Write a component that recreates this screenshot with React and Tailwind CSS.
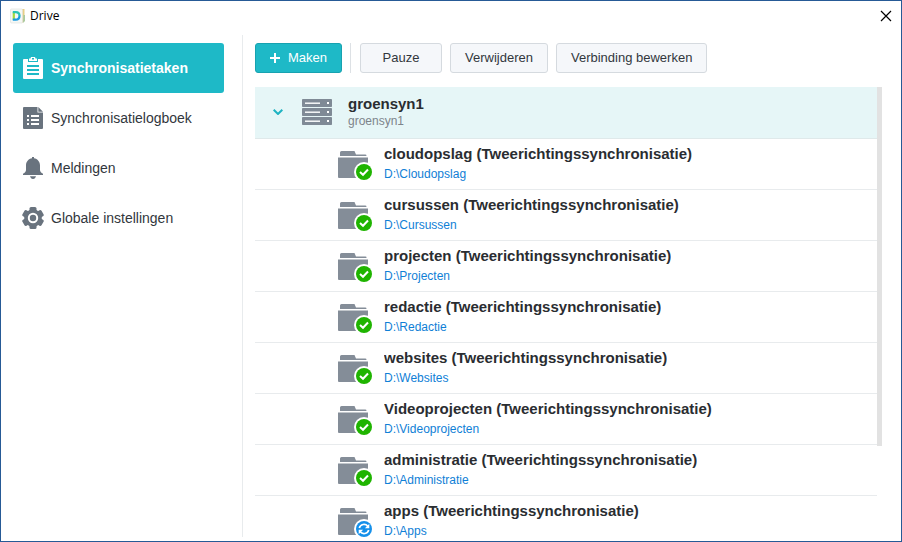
const FONT = 'font-["Liberation_Sans",Arial,sans-serif]';

const NAV_ITEMS = [
  { label: 'Synchronisatietaken', Icon: ClipboardIcon, active: true },
  { label: 'Synchronisatielogboek', Icon: LogIcon },
  { label: 'Meldingen', Icon: BellIcon },
  { label: 'Globale instellingen', Icon: GearIcon },
];

const TASKS = [
  { name: 'cloudopslag', path: 'D:\\Cloudopslag', status: 'done' },
  { name: 'cursussen', path: 'D:\\Cursussen', status: 'done' },
  { name: 'projecten', path: 'D:\\Projecten', status: 'done' },
  { name: 'redactie', path: 'D:\\Redactie', status: 'done' },
  { name: 'websites', path: 'D:\\Websites', status: 'done' },
  { name: 'Videoprojecten', path: 'D:\\Videoprojecten', status: 'done' },
  { name: 'administratie', path: 'D:\\Administratie', status: 'done' },
  { name: 'apps', path: 'D:\\Apps', status: 'syncing' },
];

function DriveLogo() {
  return (
    <svg viewBox="0 0 16 16" className="w-4 h-4 shrink-0" aria-hidden="true">
      <path d="M12 1h2.500v12L12 15z" fill="#e8cf86" />
      <path d="M13.500 7H15v6l-2 2z" fill="#a9c9a0" />
      <rect x="0.500" y="1" width="12" height="14" rx="1" fill="#f6f8f6" stroke="#dcdfdc" strokeWidth="0.600" />
      <path d="M3.800 4v8" stroke="#a5d93c" strokeWidth="2.200" fill="none" />
      <path d="M2.800 4.200h3c2.400 0 3.700 1.400 3.700 3.800" stroke="#2bc4b4" strokeWidth="2.200" fill="none" />
      <path d="M9.500 7.800c0 2.400-1.300 3.900-3.700 3.900h-3" stroke="#1a9be0" strokeWidth="2.200" fill="none" />
    </svg>
  );
}

function ClipboardIcon() {
  return (
    <svg viewBox="0 0 20 22" className="w-5 h-[22px] shrink-0" aria-hidden="true">
      <path
        fill="currentColor"
        fillRule="evenodd"
        d="M1 2h4v3h10V2h4a1 1 0 0 1 1 1v18a1 1 0 0 1-1 1H1a1 1 0 0 1-1-1V3a1 1 0 0 1 1-1zM4 8v2h12V8zM4 12v2h12v-2zM4 16v2h12v-2z"
      />
      <path fill="currentColor" fillRule="evenodd" d="M6 1.500h1.500L8 0h4l.5 1.500H14V4H6zM9 1v1.500h2V1z" />
    </svg>
  );
}

function LogIcon() {
  return (
    <svg viewBox="0 0 20 22" className="w-5 h-[22px] shrink-0" aria-hidden="true">
      <path
        fill="currentColor"
        fillRule="evenodd"
        d="M1 0h13.500v5.500H20V21a1 1 0 0 1-1 1H1a1 1 0 0 1-1-1V1a1 1 0 0 1 1-1zM4 8v2h2V8zM8 8v2h8V8zM4 12v2h2v-2zM8 12v2h8v-2zM4 16v2h2v-2zM8 16v2h8v-2z"
      />
      <path fill="currentColor" d="M15.300 0L20 4.700h-4.700z" />
    </svg>
  );
}

function BellIcon() {
  return (
    <svg viewBox="0 0 20 22" className="w-5 h-[22px] shrink-0" aria-hidden="true">
      <path
        fill="currentColor"
        d="M9 0h2v1.300c3.600.6 6 3.500 6 7.200v4.500c0 1.500 1 2.600 3 3.800V18H0v-1.200c2-1.200 3-2.300 3-3.800V8.500c0-3.700 2.400-6.600 6-7.200z"
      />
      <path fill="currentColor" d="M7 19.300h6c-.4 1.600-1.500 2.700-3 2.700s-2.600-1.100-3-2.700z" />
    </svg>
  );
}

function GearIcon() {
  return (
    <svg viewBox="0 0 22 22" className="w-[22px] h-[22px] -mx-px shrink-0" aria-hidden="true">
      <g fill="currentColor">
        <rect x="7.500" y="0" width="7" height="22" rx="1.500" />
        <rect x="7.500" y="0" width="7" height="22" rx="1.500" transform="rotate(60 11 11)" />
        <rect x="7.500" y="0" width="7" height="22" rx="1.500" transform="rotate(120 11 11)" />
        <circle cx="11" cy="11" r="8.800" />
      </g>
      <circle cx="11" cy="11" r="4.200" fill="none" stroke="#fff" strokeWidth="2" />
    </svg>
  );
}

function ServerIcon() {
  return (
    <svg viewBox="0 0 30 26" className="w-[30px] h-[26px] shrink-0" aria-hidden="true">
      {[0, 9, 18].map((y) => (
        <g key={y}>
          <rect x="0" y={y} width="30" height="8" rx="0.800" fill="#7f8a96" />
          <rect x="3" y={y + 3.500} width="15" height="1.400" fill="#fff" />
          <rect x="25" y={y + 3} width="2" height="2" fill="#fff" />
        </g>
      ))}
    </svg>
  );
}

function TaskIcon({ status }) {
  return (
    <svg viewBox="0 0 36 32" className="w-9 h-8 shrink-0" aria-hidden="true">
      <path fill="#848d98" d="M2 7V3.500A1.500 1.500 0 0 1 3.500 2h13L18 5.500h9.500a1 1 0 0 1 .8 1.500z" />
      <path fill="#848d98" d="M0 8.500h30V28a1 1 0 0 1-1 1H1a1 1 0 0 1-1-1z" />
      <circle cx="26" cy="23" r="10" fill="#fff" />
      {status === 'done' ? (
        <>
          <circle cx="26" cy="23" r="8" fill="#1fb400" />
          <path d="M22 23l3 2.800 5-5.300" fill="none" stroke="#fff" strokeWidth="2" />
        </>
      ) : (
        <>
          <circle cx="26" cy="23" r="8" fill="#1590ea" />
          <path d="M21.300 22a4.900 4.900 0 0 1 8.500-1.800M30.700 24a4.900 4.900 0 0 1-8.500 1.800" fill="none" stroke="#fff" strokeWidth="1.700" />
          <path d="M31.300 17.800v4.400h-4.400zM20.700 28.200v-4.400h4.400z" fill="#fff" />
        </>
      )}
    </svg>
  );
}

function NavItem({ label, Icon, active }) {
  return (
    <button
      className={`flex items-center gap-2 w-full h-[50px] px-[10px] rounded-[3px] text-left ${
        active ? 'bg-[#1eb9c7] text-white font-bold' : 'text-[#69737e]'
      }`}
    >
      <Icon />
      <span className={active ? '' : 'text-[#32373d]'}>{label}</span>
    </button>
  );
}

function ToolbarButton({ children }) {
  return (
    <button className="h-[30px] min-w-[82px] px-[14px] rounded-[3px] border border-[#d5dadf] bg-[#f5f7fa] text-[13px] text-[#32373d]">
      {children}
    </button>
  );
}

function TaskRow({ task }) {
  return (
    <li className="flex items-center gap-[10px] h-[51px] pl-[83px] border-b border-[#e8ebed]">
      <div className="pt-0.5">
        <TaskIcon status={task.status} />
      </div>
      <div className="min-w-0">
        <p className="truncate text-[15px] font-bold leading-5 text-[#2a2d31]">
          {task.name} (Tweerichtingssynchronisatie)
        </p>
        <a href="#" className="block text-xs leading-5 text-[#0f80d6]">{task.path}</a>
      </div>
    </li>
  );
}

export default function App() {
  return (
    <div className={`${FONT} flex flex-col h-screen overflow-hidden border border-[#265a96] bg-white text-sm`}>
      <header className="flex items-center justify-between h-[34px] shrink-0 pl-[9px] pr-[9px] pb-1">
        <div className="flex items-center gap-1">
          <DriveLogo />
          <h1 className='font-["Open_Sans","Noto_Sans",sans-serif] text-xs text-black'>Drive</h1>
        </div>
        <button aria-label="Sluiten">
          <svg viewBox="0 0 12 12" className="w-3 h-3" aria-hidden="true">
            <path d="M1 1l10 10M11 1L1 11" stroke="#000" strokeWidth="1.200" />
          </svg>
        </button>
      </header>

      <div className="flex flex-1 min-h-0">
        <nav className="w-[242px] shrink-0 mb-1 pt-2 pl-3 pr-[18px] border-r border-[#e8ebed]">
          {NAV_ITEMS.map((item) => (
            <NavItem key={item.label} {...item} />
          ))}
        </nav>

        <main className="flex flex-col flex-1 min-w-0 pt-2 pl-3 pr-[19px]">
          <div className="flex items-center gap-2 shrink-0 mb-[14px]">
            <button className="flex items-center gap-2 h-[30px] px-[14px] rounded-[3px] border border-[#17a2b0] bg-[#1eb9c7] text-[13px] text-white">
              <svg viewBox="0 0 10 10" className="w-[10px] h-[10px]" aria-hidden="true">
                <path d="M5 0v10M0 5h10" stroke="currentColor" strokeWidth="2" />
              </svg>
              Maken
            </button>
            <div className="w-px h-[30px] mr-px bg-[#dde1e5]" />
            <ToolbarButton>Pauze</ToolbarButton>
            <ToolbarButton>Verwijderen</ToolbarButton>
            <ToolbarButton>Verbinding bewerken</ToolbarButton>
          </div>

          <div className="flex flex-1 min-h-0">
            <div className="flex-1 min-w-0 overflow-hidden">
              <div className="flex items-center h-[52px] pl-[18px] pb-px border-b border-[#dfe9ea] bg-[#e6f6f7]">
                <button aria-label="groensyn1 inklappen" className="mr-[19px]">
                  <svg viewBox="0 0 10 6" className="w-[10px] h-[6px]" aria-hidden="true">
                    <path d="M0.700 0.700L5 5l4.300-4.300" fill="none" stroke="#1eb3c2" strokeWidth="2" />
                  </svg>
                </button>
                <ServerIcon />
                <div className="ml-4">
                  <p className="text-[15px] font-bold leading-[18px] text-[#2a2d31]">groensyn1</p>
                  <p className="text-xs leading-4 text-[#7d848b]">groensyn1</p>
                </div>
              </div>
              <ul>
                {TASKS.map((task) => (
                  <TaskRow key={task.name} task={task} />
                ))}
              </ul>
            </div>
            <div className="w-[5px] shrink-0">
              <div className="h-[79%] bg-[#e2e2e2]" />
            </div>
          </div>
        </main>
      </div>
    </div>
  );
}
